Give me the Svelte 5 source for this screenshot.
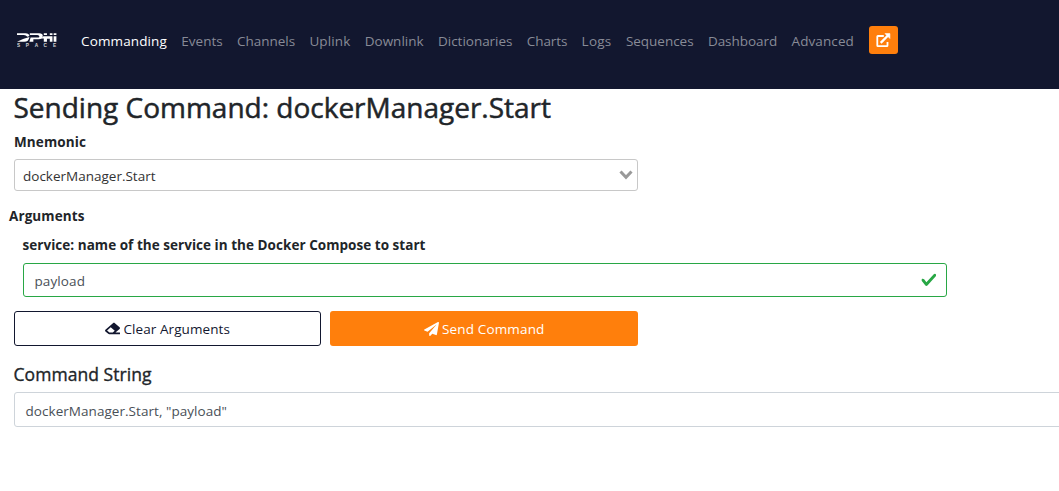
<script>
  const links = [
    ['Commanding', 86], ['Events', 41.5], ['Channels', 58], ['Uplink', 41], ['Downlink', 59],
    ['Dictionaries', 74.5], ['Charts', 40.5], ['Logs', 30], ['Sequences', 67.7], ['Dashboard', 69.3], ['Advanced', 62.5]
  ];

  // Spreads the tracking of a label so that it fills the given width.
  function fit(node, width) {
    const natural = node.getBoundingClientRect().width;
    node.style.letterSpacing = `${(width - natural) / node.textContent.length}px`;
  }
</script>

<header>
  <svg class="logo" width="40" height="15" viewBox="0 0 40.6 15" preserveAspectRatio="none" fill="#fff" aria-label="DPHI Space">
    <path d="M0 .3H8.5Q12.4 .6 12.6 3L10.6 3.7Q9 2.1 7 2H0Z" />
    <path d="M0 8.8Q5.500 5.600 12.600 3.900Q11.800 8.800 7.500 8.800Z" />
    <path d="M13 .3H22.5Q26.2 .5 26.2 2.7Q26 6.2 22 6.2H16.6V8.8H12.600L13.800 4.600H22Q23 4.300 22.600 3.300Q22 2 20.500 2H13Z" />
    <path d="M27.2 .3H30.4V2H27.2ZM33.3 .3H36V2H33.3ZM26.800 3.200H36V8.800H33.300V5.800H30.400V8.800H27.200V5.500H24.500ZM37.200 .3H40V2H37.200ZM37.200 3.200H40V8.800H37.200Z" />
    <g font-family="Liberation Sans, sans-serif" font-weight="700" font-size="4.8" opacity=".8">
      <text x="0" y="14.500">S</text><text x="9" y="14.500">P</text><text x="18" y="14.500">A</text><text x="27" y="14.500">C</text><text x="36.500" y="14.500">E</text>
    </g>
  </svg>
  <nav>
    {#each links as [label, width], i}
      <a href="#{label}" class:active={i === 0}><span use:fit={width}>{label}</span></a>
    {/each}
  </nav>
  <button class="open" aria-label="Open in new window">
    <svg width="15" height="15" viewBox="0 0 15 15" fill="none" stroke="#fff">
      <path d="M7.8 3H1.9Q1.3 3 1.3 3.6V12.6Q1.3 13.2 1.9 13.2H10.9Q11.5 13.2 11.5 12.6V9" stroke-width="1.8" />
      <path d="M4.7 9.8L12 2.5" stroke-width="2.4" />
      <path d="M9 .6H13.9V5.5Z" fill="#fff" stroke-width=".6" />
    </svg>
  </button>
</header>

<main>
  <h1><span use:fit={537.5}>Sending Command: dockerManager.Start</span></h1>
  <div class="label mnemonic"><span use:fit={72}>Mnemonic</span></div>
  <div class="select">
    <span use:fit={132.5}>dockerManager.Start</span>
    <svg width="14" height="10" viewBox="0 0 14 10"><path d="M1.5 1.5L7 7.3L12.5 1.5" fill="none" stroke="#999" stroke-width="3" /></svg>
  </div>
  <div class="label arguments"><span use:fit={75.5}>Arguments</span></div>
  <div class="label service"><span use:fit={403}>service: name of the service in the Docker Compose to start</span></div>
  <div class="field valid">
    <span use:fit={50.5}>payload</span>
    <svg width="15" height="13" viewBox="0 0 7.2 6.4" preserveAspectRatio="none"><path fill="#28a745" transform="translate(-.2 -.6)" d="M2.3 6.73L.6 4.53c-.4-1.04.46-1.4 1.1-.8l1.1 1.4 3.4-3.8c.6-.63 1.6-.27 1.2.7l-4 4.6c-.43.5-.8.4-1.1.1z" /></svg>
  </div>
  <div class="actions">
    <button class="clear">
      <svg width="15" height="13" viewBox="0 0 512 512" preserveAspectRatio="none"><path fill="currentColor" d="M497.941 273.941c18.745-18.745 18.745-49.137 0-67.882l-160-160c-18.745-18.745-49.136-18.746-67.883 0l-256 256c-18.745 18.745-18.745 49.137 0 67.882l96 96A48.004 48.004 0 0 0 144 480h356c6.627 0 12-5.373 12-12v-40c0-6.627-5.373-12-12-12H355.883l142.058-142.059zm-302.627-62.627l137.373 137.373L265.373 416H150.628l-80-80 124.686-124.686z" /></svg>
      <span use:fit={106.5}>Clear Arguments</span>
    </button>
    <button class="send">
      <svg width="15" height="14" viewBox="0 0 512 512" preserveAspectRatio="none"><path fill="currentColor" d="M476 3.2L12.5 270.6c-18.1 10.4-15.8 35.6 2.2 43.2L121 358.4l287.3-253.2c5.5-4.9 13.3 2.6 8.6 8.3L176 407v80.5c0 23.6 28.5 32.9 42.5 15.8L282 426l124.6 52.2c14.2 6 30.4-2.9 33-18.2l72-432C515 7.800 493.3-6.8 476 3.2z" /></svg>
      <span use:fit={102.5}>Send Command</span>
    </button>
  </div>
  <h2><span use:fit={138}>Command String</span></h2>
  <div class="field command"><span use:fit={201.5}>dockerManager.Start, "payload"</span></div>
</main>

<style>
  :global(body) { margin: 0; background: #fff; overflow: hidden; }
  header, main, button { font: 400 14px/20px "Open Sans", "Noto Sans", sans-serif; }
  span { white-space: nowrap; }
  header { box-sizing: border-box; height: 89px; padding: 26px 0 0 17px; display: flex; align-items: flex-start; background: #12172f; }
  .logo { flex: none; margin: 7px 24px 0 0; }
  nav { display: flex; gap: 14.3px; padding-top: 5px; }
  a { color: #888b97; text-decoration: none; font-size: 13.5px; }
  a.active { color: #fff; }
  svg { display: block; flex: none; }
  .open { width: 29px; height: 28px; margin-left: 15px; padding: 0 0 0 7px; border: 0; border-radius: 3px; background: #ff7f0c; }
  main { padding: 0 0 0 14px; color: #212529; }
  h1 { margin: 0 0 0 -.5px; font-size: 28px; line-height: 36px; font-weight: 400; height: 36px; -webkit-text-stroke: .5px #212529; }
  .label { font-weight: 700; font-size: 13.5px; height: 20px; }
  .mnemonic { margin-top: 7px; }
  .select { box-sizing: border-box; width: 624px; height: 32px; margin-top: 7px; padding: 2px 4px 0 8px; display: flex; align-items: center; justify-content: space-between; border: 1px solid #c8c8c8; border-radius: 3px; color: #333; font-size: 13.5px; }
  .select svg { margin-top: -2px; }
  .arguments { margin: 15px 0 0 -5px; }
  .service { margin: 9px 0 0 8.5px; }
  .field { box-sizing: border-box; display: flex; align-items: center; color: #495057; font-size: 13.5px; background: #fff; }
  .valid { width: 924px; height: 34px; margin: 8px 0 0 9px; padding: 2px 10px 0 10.5px; justify-content: space-between; border: 1px solid #28a745; border-radius: 3px; }
  .valid svg { margin-top: -3px; }
  .actions { display: flex; gap: 9px; margin-top: 14px; }
  .actions button { box-sizing: border-box; height: 35px; padding: 1px 0 0; display: flex; align-items: center; justify-content: center; gap: 3.5px; border-radius: 3px; font-size: 13.5px; }
  .actions svg { margin-top: -1px; }
  .clear { width: 307px; color: #12172f; background: #fff; border: 1px solid #12172f; }
  .send { width: 308px; color: #fff; background: #ff7f0c; border: 0; }
  h2 { margin: 17px 0 0 -.5px; font-size: 17.5px; line-height: 22px; font-weight: 400; -webkit-text-stroke: .35px #212529; }
  .command { width: 1060px; height: 35px; margin-top: 7px; padding: 2px 0 0 10.5px; border: 1px solid #ced4da; border-radius: 3px; }
</style>
